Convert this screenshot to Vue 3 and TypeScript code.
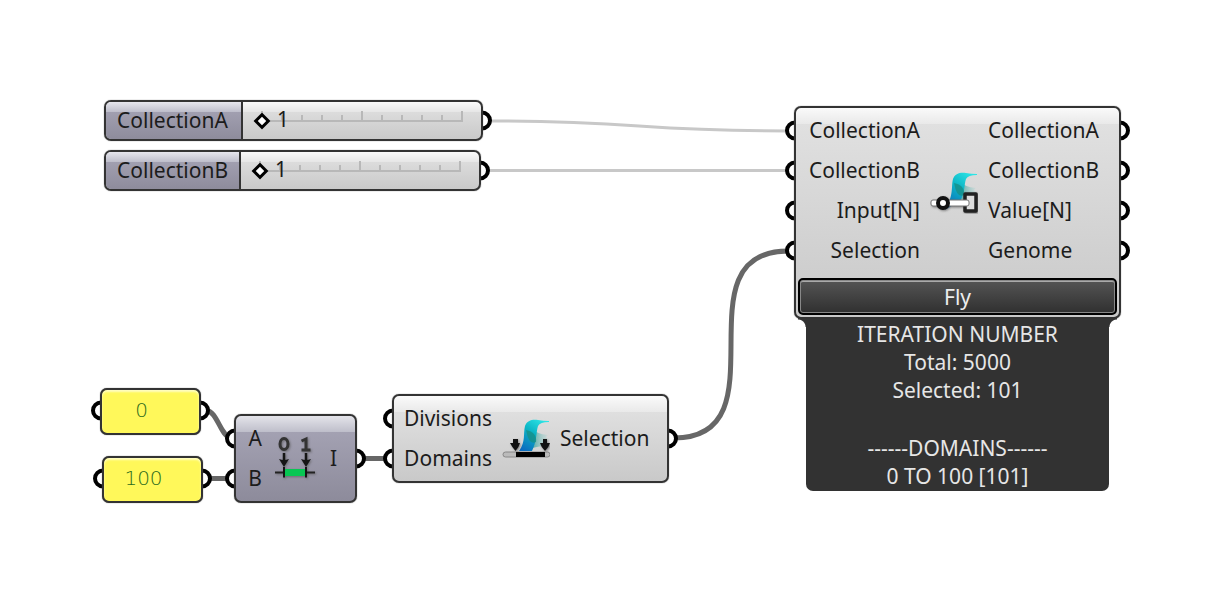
<script setup lang="ts">
import { reactive } from 'vue'

interface Port { x: number; y: number }

const sliders = reactive([
  { id: 'a', name: 'CollectionA', value: 1 },
  { id: 'b', name: 'CollectionB', value: 1 },
])

const panels = reactive([
  { id: 'start', name: 'Domain start', text: '0' },
  { id: 'end', name: 'Domain end', text: '100' },
])

const ticks = Array.from({ length: 11 }, (_, i) => ({ x: i * 20 + 6, major: i % 5 === 0 }))

const inputs = ['CollectionA', 'CollectionB', 'Input[N]', 'Selection']
const outputs = ['CollectionA', 'CollectionB', 'Value[N]', 'Genome']

const ports: Port[] = [
  { x: 482, y: 120 }, { x: 480, y: 170 },
  { x: 795, y: 130 }, { x: 795, y: 170 }, { x: 795, y: 210 }, { x: 795, y: 250 },
  { x: 1120, y: 130 }, { x: 1120, y: 170 }, { x: 1120, y: 210 }, { x: 1120, y: 250 },
  { x: 101, y: 410 }, { x: 200, y: 410 }, { x: 103, y: 478 }, { x: 202, y: 478 },
  { x: 235, y: 438 }, { x: 235, y: 478 }, { x: 356, y: 458 },
  { x: 393, y: 418 }, { x: 393, y: 458 }, { x: 668, y: 438 },
]
</script>

<template>
  <main class="canvas">
    <svg class="links" aria-hidden="true">
      <g class="wire light">
        <path d="M490 121C640 121 638 131 788 131" />
        <path d="M488 170.500H788" />
      </g>
      <g class="wire heavy">
        <path d="M674 438C787 438 675 251 788 251" />
        <path d="M206 410C218 412 220 436 231 438" />
        <path d="M208 478.500H230" />
        <path d="M362 458.500H388" />
      </g>
      <circle v-for="(p, i) in ports" :key="i" class="port" :cx="p.x" :cy="p.y + 0.5" r="8" />
    </svg>

    <section v-for="s in sliders" :key="s.id" class="node slider" :class="`slider-${s.id}`">
      <label class="slider-name" :for="`slider-${s.id}`">{{ s.name }}</label>
      <div class="track">
        <svg class="scale" width="212" height="24" aria-hidden="true">
          <path d="M14 12H207" />
          <path v-for="t in ticks" :key="t.x" :d="`M${t.x} ${t.major ? 2 : 6}V13`" />
        </svg>
        <input :id="`slider-${s.id}`" v-model.number="s.value" type="range" min="1" max="11" />
        <output class="value" :for="`slider-${s.id}`">{{ s.value }}</output>
      </div>
    </section>

    <section v-for="p in panels" :key="p.id" class="node panel" :class="`panel-${p.id}`">
      <input v-model="p.text" type="text" :aria-label="p.name" />
    </section>

    <section class="node domain">
      <ul class="names end"><li>A</li><li>B</li></ul>
      <svg class="icon" viewBox="0 0 48 48" aria-hidden="true">
        <g class="shade">
          <ellipse cx="12" cy="10" rx="4" ry="5.500" fill="none" stroke="#333" stroke-width="3" />
          <path d="M29.500 7L34 5V16M29.500 16H38.500" fill="none" stroke="#333" stroke-width="3" />
          <path d="M12 19V27M34 19V27" stroke="#151515" stroke-width="2.500" />
          <path d="M7 25Q12 27 17 25L12 33ZM29 25Q34 27 39 25L34 33Z" fill="#151515" />
          <path d="M3 38.500H43" stroke="#222" stroke-width="2" />
          <path d="M13 35H33V42H13Z" fill="#08c653" />
          <path d="M12 33V43.500M34 33V43.500" stroke="#151515" stroke-width="2" />
        </g>
      </svg>
      <ul class="names"><li>I</li></ul>
    </section>

    <section class="node selection">
      <ul class="names end"><li>Divisions</li><li>Domains</li></ul>
      <svg class="icon" viewBox="0 0 48 48" aria-hidden="true">
        <defs>
          <linearGradient id="plume-a" x1="0.800" y1="0" x2="0.200" y2="1">
            <stop offset="0" stop-color="#2de5e6" /><stop offset="0.450" stop-color="#0bb3c4" />
            <stop offset="1" stop-color="#0b6cc0" />
          </linearGradient>
          <linearGradient id="tail-a">
            <stop offset="0" stop-color="#4fa9a5" /><stop offset="1" stop-color="#b9d9d6" stop-opacity="0.300" />
          </linearGradient>
        </defs>
        <path d="M30 14Q34 20 46 21Q42 23 47 26Q42 27 40 32L30 34Z" fill="url(#tail-a)" />
        <path d="M47 8Q38 8 36 12C34 18 35 27 30 37H17C24 27 21 20 23 12C25 6 31 5 36 6Q41 7 47 7Z" fill="url(#plume-a)" />
        <path d="M24 16Q35 18 34 28Q27 32 24 16" fill="#178e87" opacity="0.800" />
        <rect x="1" y="38" width="47" height="5" rx="2.500" fill="#bbb" stroke="#888" />
        <path d="M14 38H43V43H14Z" fill="#000" />
        <g class="shade" fill="#111">
          <path d="M11 25H16V29H18Q17 33 13.500 37Q10 33 8 29H11ZM41 25H45V29H48Q47 33 43 37Q39 33 38 29H41Z" />
        </g>
      </svg>
      <ul class="names"><li>Selection</li></ul>
    </section>

    <section class="colibri">
      <div class="node iterator">
        <div class="pins">
          <ul class="names end"><li v-for="n in inputs" :key="n">{{ n }}</li></ul>
          <svg class="icon" viewBox="0 0 48 48" aria-hidden="true">
            <defs>
              <linearGradient id="plume-b" x1="0.800" y1="0" x2="0.200" y2="1">
                <stop offset="0" stop-color="#2de5e6" /><stop offset="0.450" stop-color="#0bb3c4" />
                <stop offset="1" stop-color="#0b6cc0" />
              </linearGradient>
              <linearGradient id="tail-b">
                <stop offset="0" stop-color="#4fa9a5" /><stop offset="1" stop-color="#b9d9d6" stop-opacity="0.300" />
              </linearGradient>
            </defs>
            <path d="M30 15Q34 21 46 22Q42 24 47 27Q42 28 40 32L30 34Z" fill="url(#tail-b)" />
            <path d="M47 9Q38 9 36 13C34 19 35 27 30 35L15 44C24 29 21 21 23 13C25 7 31 6 36 7Q41 8 47 8Z" fill="url(#plume-b)" />
            <path d="M24 17Q35 19 34 29Q27 33 24 17" fill="#178e87" opacity="0.800" />
            <g class="shade">
              <path d="M35 28H46V45H35Z" fill="#ddd" stroke="#222" stroke-width="3.500" stroke-linejoin="round" />
              <rect x="1" y="34" width="38" height="6" rx="2" fill="#fff" stroke="#777" />
              <circle cx="13" cy="37" r="5" fill="#fff" stroke="#111" stroke-width="4" />
            </g>
          </svg>
          <ul class="names"><li v-for="n in outputs" :key="n">{{ n }}</li></ul>
        </div>
        <button class="fly" type="button">Fly</button>
      </div>
      <div class="report">
        <p>ITERATION NUMBER<br />Total: 5000<br />Selected: 101</p>
        <p>------DOMAINS------<br />0 TO 100 [101]</p>
      </div>
    </section>
  </main>
</template>

<style>
body {
  margin: 0;
  background: #fff;
}
</style>

<style scoped>
.canvas {
  position: relative;
  min-height: 100vh;
  overflow: hidden;
  font: 21px/40px "Noto Sans", "Open Sans", sans-serif;
  color: #1c1c1c;
}
.canvas * {
  box-sizing: border-box;
}
.links {
  position: absolute;
  inset: 0;
  width: 100%;
  height: 100%;
}
.wire {
  fill: none;
}
.light {
  stroke: #c8c8c8;
  stroke-width: 3;
}
.heavy {
  stroke: #676767;
  stroke-width: 5;
}
.port {
  fill: #fff;
  stroke: #000;
  stroke-width: 4;
}
.node {
  position: absolute;
  border: 2px solid #333;
  border-radius: 7px;
  background: linear-gradient(#fafafa, #e9e9e9 16px, #dfdfdf 16px, #c9c9c9);
  box-shadow: 0 0 1px #555;
}
.slider {
  display: flex;
  left: 104px;
  background: linear-gradient(#fafafa, #e6e6e6 10px, #dcdcdc 10px, #c9c9c9);
}
.slider-a {
  top: 100px;
  width: 379px;
}
.slider-b {
  top: 150px;
  width: 377px;
}
.slider-name {
  flex: 1;
  padding-left: 11px;
  border-right: 2px solid #333;
  border-radius: 5px 0 0 5px;
  background: linear-gradient(#e6e6ed, #bdbdca 10px, #a19fb0 10px, #8e8c9c);
  line-height: 37px;
}
.track {
  display: grid;
  align-items: center;
  width: 238px;
  padding-left: 13px;
}
.track > * {
  grid-area: 1 / 1;
}
.scale {
  fill: none;
  stroke: #b8b8b8;
  stroke-width: 2;
}
.track input {
  width: 212px;
  height: 20px;
  margin: 0;
  appearance: none;
  background: transparent;
}
.track input::-webkit-slider-thumb {
  appearance: none;
  width: 12px;
  height: 12px;
  border: 3px solid #000;
  background: #fff;
  transform: rotate(45deg);
}
.value {
  padding: 0 0 3px 21px;
  line-height: 34px;
  pointer-events: none;
}
.panel {
  width: 101px;
  background: #fff85a;
  box-shadow: 0 0 1px #555, inset 0 2px 2px #fffdc0;
}
.panel input {
  display: block;
  width: 100%;
  height: 43px;
  padding: 0 18px 3px 0;
  border: 0;
  background: transparent;
  color: #2c6b1c;
  font: 200 20px "DejaVu Sans", sans-serif;
  text-align: center;
}
.panel-start {
  top: 388px;
  left: 100px;
}
.panel-end {
  top: 456px;
  left: 102px;
}
.names {
  margin: 0;
  padding: 0;
  list-style: none;
}
.end {
  text-align: right;
}
.icon {
  width: 48px;
  height: 48px;
}
.domain,
.selection {
  display: grid;
  align-items: center;
  column-gap: 10px;
  padding: 2px 0 3px;
}
.domain {
  top: 414px;
  left: 234px;
  width: 123px;
  grid-template-columns: 26px 48px 1fr;
  background: linear-gradient(#e4e4ea, #bebeca 16px, #a3a1b2 16px, #8d8b9b);
}
.shade {
  filter: drop-shadow(1px 1px 1px #555a);
}
.selection {
  top: 394px;
  left: 392px;
  width: 277px;
  grid-template-columns: 98px 48px 1fr;
}
.colibri {
  position: absolute;
  top: 106px;
  left: 794px;
  width: 327px;
}
.iterator {
  position: relative;
  z-index: 1;
  padding: 2px;
  background: linear-gradient(#fafafa, #e9e9e9 16px, #e0e0e0 16px, #c9c9c9);
}
.pins {
  display: grid;
  grid-template-columns: 122px 48px 1fr;
  align-items: center;
  column-gap: 10px;
  padding-bottom: 8px;
}
.fly {
  display: block;
  width: 100%;
  height: 37px;
  padding: 0;
  border: 2px solid #000;
  border-radius: 5px;
  background: linear-gradient(#555, #303030);
  box-shadow: inset 0 0 0 1px #888, inset 0 2px 0 #aaa;
  color: #eee;
  font: inherit;
  line-height: 30px;
}
.report {
  position: relative;
  margin: -2px 12px 0;
  padding: 3px 0 1px;
  border-radius: 0 0 7px 7px;
  background: #323232;
  color: #e6e6e6;
  line-height: 28px;
  text-align: center;
}
.report::before,
.report::after {
  content: "";
  position: absolute;
  top: 0;
  width: 8px;
  height: 10px;
}
.report::before {
  right: 100%;
  background: radial-gradient(circle at 0 100%, transparent 7px, #323232 8px);
}
.report::after {
  left: 100%;
  background: radial-gradient(circle at 100% 100%, transparent 7px, #323232 8px);
}
.report p {
  margin: 0;
}
.report p + p {
  margin-top: 30px;
}
</style>
